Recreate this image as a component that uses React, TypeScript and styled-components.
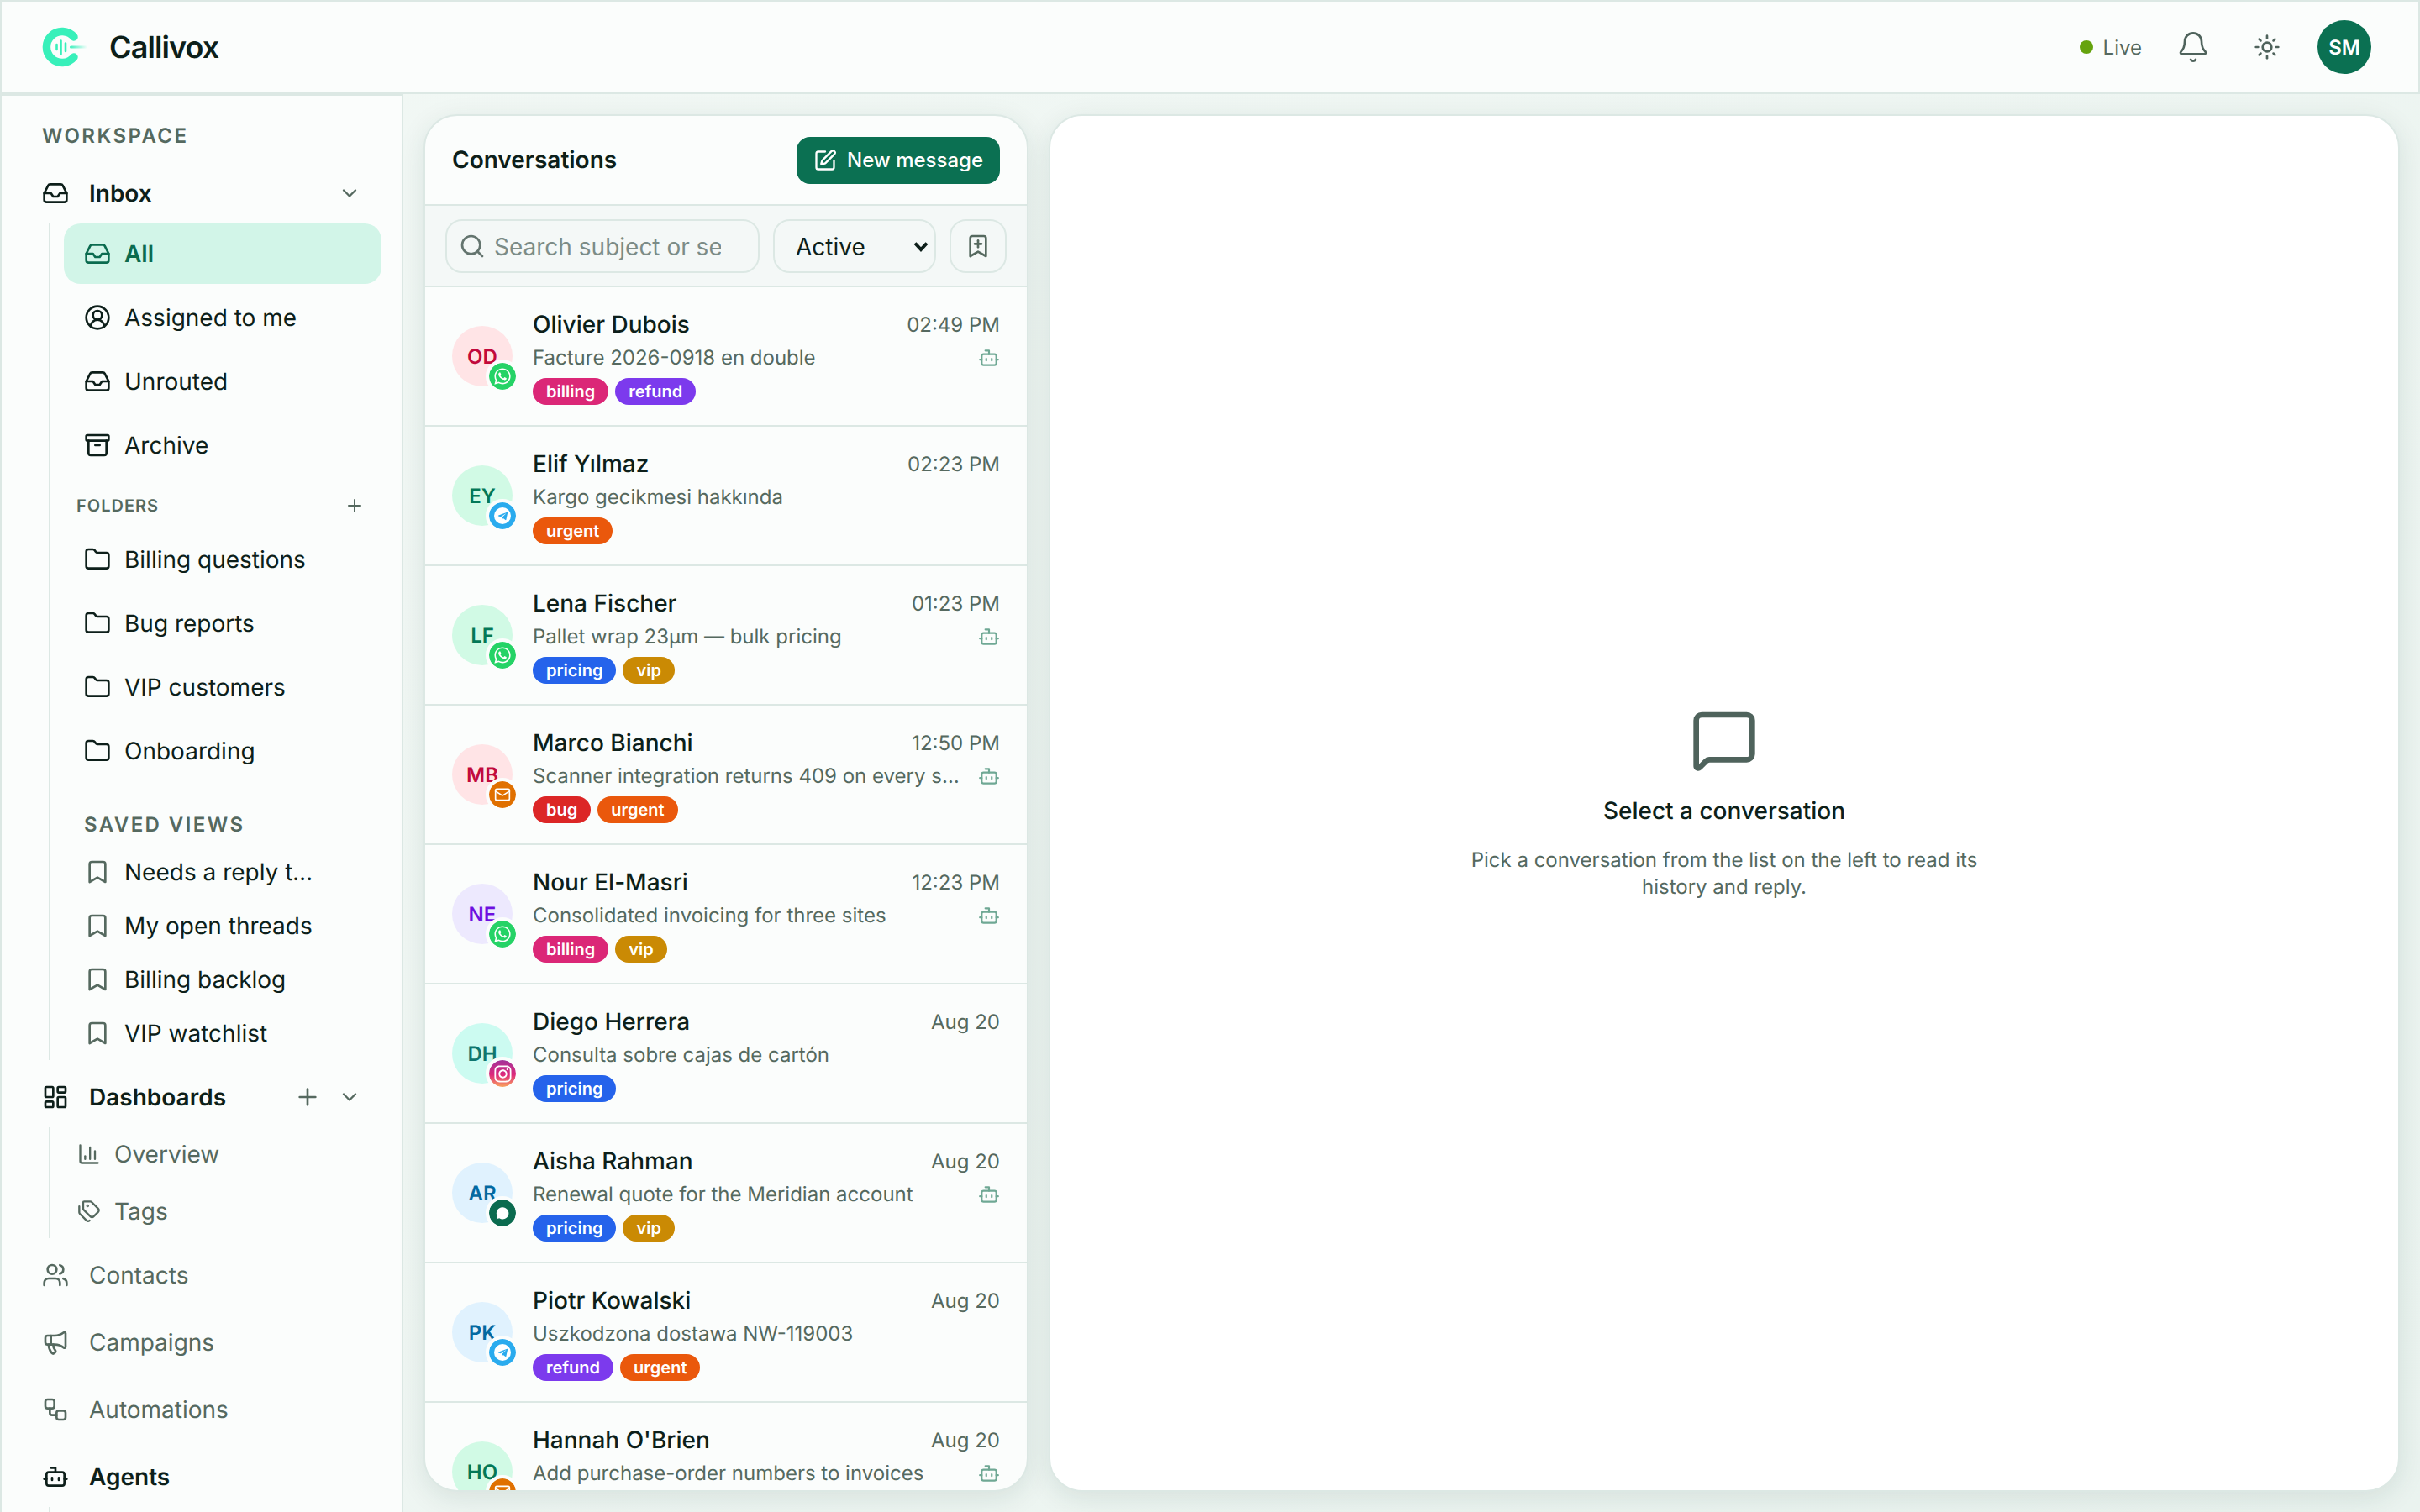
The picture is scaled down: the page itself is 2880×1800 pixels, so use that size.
import React from 'react';
import styled, { createGlobalStyle } from 'styled-components';
import {
  Inbox, CircleUserRound, Archive, Folder, Bookmark, BookmarkPlus, ChevronDown, Plus, LayoutDashboard,
  ChartColumn, Tags, Users, Megaphone, Workflow, Bot, Bell, Sun, Search, SquarePen, MessageSquare, Mail,
} from 'lucide-react';
import { FaWhatsapp, FaTelegramPlane, FaInstagram } from 'react-icons/fa';

const GlobalStyle = createGlobalStyle`
  * { box-sizing: border-box; }
  html, body { margin: 0; padding: 0; height: 100%; }
  body {
    font-family: Inter, "Noto Sans", sans-serif;
    background: #eef5f2;
    color: #0d1f1a;
    overflow: hidden;
    text-rendering: geometricPrecision;
    -webkit-font-smoothing: antialiased;
  }
  #root { height: 100%; }
`;

const Shell = styled.div`
  width: 2880px;
  height: 1800px;
  display: flex;
  flex-direction: column;
  background: linear-gradient(135deg, #f2f8f5, #eaf3ef);
`;

const TopBar = styled.header`
  height: 112px;
  flex: none;
  display: flex;
  align-items: center;
  padding: 0 56px 0 48px;
  background: #fbfdfc;
  border: 2px solid #dce8e4;
`;

const Brand = styled.div`
  display: flex;
  align-items: center;
  gap: 24px;
  font-size: 36px;
  font-weight: 600;
  letter-spacing: -0.9px;
`;

const TopActions = styled.div`
  margin-left: auto;
  display: flex;
  align-items: center;
`;

const Live = styled.div`
  display: flex;
  align-items: center;
  gap: 12px;
  font-size: 24px;
  color: #55695f;
  margin-right: 41px;
`;

const Dot = styled.span`
  width: 16px;
  height: 16px;
  border-radius: 50%;
  background: #65a30d;
`;

const TopIcon = styled.span<{ $gap?: number }>`
  display: flex;
  margin-left: ${(p) => p.$gap ?? 0}px;
  color: #4f635c;
`;

const UserAvatar = styled.div`
  width: 64px;
  height: 64px;
  border-radius: 50%;
  background: #0b7052;
  color: #fff;
  font-size: 24px;
  font-weight: 600;
  display: flex;
  align-items: center;
  justify-content: center;
  margin-left: 44px;
`;

const Body = styled.div`
  flex: 1;
  min-height: 0;
  display: flex;
`;

const Sidebar = styled.nav`
  width: 480px;
  flex: none;
  background: #fbfdfc;
  border: 2px solid #dce8e4;
  border-bottom: none;
  padding: 29px 24px 0 48px;
  overflow: hidden;
  display: flex;
  flex-direction: column;
`;

const SectionLabel = styled.div<{ $indent?: number; $top?: number; $bottom?: number }>`
  font-size: 24px;
  line-height: 38px;
  font-weight: 600;
  letter-spacing: 2.4px;
  color: #55695f;
  padding-left: ${(p) => p.$indent ?? 0}px;
  margin-top: ${(p) => p.$top ?? 0}px;
  margin-bottom: ${(p) => p.$bottom ?? 0}px;
`;

const TopRow = styled.div<{ $strong?: boolean }>`
  height: 72px;
  margin-top: 8px;
  flex: none;
  display: flex;
  align-items: center;
  gap: 24px;
  padding-right: 24px;
  font-size: 28px;
  font-weight: ${(p) => (p.$strong ? 600 : 400)};
  color: ${(p) => (p.$strong ? '#0d1f1a' : '#55695f')};
  svg { flex: none; }
`;

const RowEnd = styled.div`
  margin-left: auto;
  display: flex;
  align-items: center;
  gap: 20px;
  color: #55695f;
`;

const Rail = styled.div<{ $fill?: boolean }>`
  margin-left: 8px;
  border-left: 2px solid #dce8e4;
  flex: ${(p) => (p.$fill ? 1 : 'none')};
`;

const SubList = styled.div`
  display: flex;
  flex-direction: column;
  gap: 4px;
  padding-left: 16px;
`;

const SubItem = styled.div<{ $active?: boolean }>`
  height: 72px;
  display: flex;
  align-items: center;
  gap: 16px;
  padding-left: 24px;
  border-radius: 20px;
  font-size: 28px;
  font-weight: ${(p) => (p.$active ? 600 : 400)};
  color: ${(p) => (p.$active ? '#0b6b4f' : '#0d1f1a')};
  background: ${(p) => (p.$active ? '#d2f5e8' : 'transparent')};
  svg { flex: none; }
`;

const FolderHead = styled.div`
  height: 56px;
  margin-top: 8px;
  display: flex;
  align-items: center;
  justify-content: space-between;
  padding: 0 20px 0 31px;
  font-size: 20px;
  font-weight: 600;
  letter-spacing: 1px;
  color: #55695f;
`;

const SavedItem = styled.div`
  height: 64px;
  display: flex;
  align-items: center;
  gap: 16px;
  padding-left: 40px;
  font-size: 28px;
  svg { flex: none; color: #55695f; }
`;

const SavedText = styled.span`
  width: 230px;
  white-space: nowrap;
  overflow: hidden;
  text-overflow: ellipsis;
`;

const DashList = styled.div`
  display: flex;
  flex-direction: column;
  gap: 4px;
`;

const DashItem = styled.div`
  height: 64px;
  display: flex;
  align-items: center;
  gap: 16px;
  padding-left: 32px;
  font-size: 28px;
  color: #55695f;
  svg { flex: none; }
`;

const Main = styled.main`
  flex: 1;
  min-width: 0;
  display: flex;
  gap: 24px;
  padding: 24px;
`;

const Panel = styled.section`
  background: #fbfdfc;
  border: 2px solid #dce8e4;
  border-radius: 40px;
  box-shadow: 0 8px 32px rgba(15, 60, 45, 0.1);
  overflow: hidden;
  display: flex;
  flex-direction: column;
`;

const ListPanel = styled(Panel)`
  width: 720px;
  flex: none;
`;

const DetailPanel = styled(Panel)`
  flex: 1;
  min-width: 0;
  align-items: center;
  justify-content: center;
  background: #fff;
`;

const PanelHead = styled.div`
  height: 107px;
  flex: none;
  display: flex;
  align-items: center;
  justify-content: space-between;
  padding: 0 32px;
  border-bottom: 2px solid #dce8e4;
`;

const PanelTitle = styled.h2`
  margin: 0 0 2px;
  font-size: 28px;
  font-weight: 600;
`;

const NewButton = styled.button`
  height: 56px;
  width: 242px;
  display: flex;
  align-items: center;
  justify-content: center;
  gap: 12px;
  border: none;
  border-radius: 16px;
  background: #0b7052;
  color: #fff;
  font-family: inherit;
  font-size: 24px;
  font-weight: 500;
`;

const Toolbar = styled.div`
  flex: none;
  height: 97px;
  display: flex;
  align-items: center;
  gap: 16px;
  padding: 0 24px;
  background: #f4f8f7;
  border-bottom: 2px solid #dce8e4;
`;

const SearchBox = styled.label`
  width: 374px;
  height: 64px;
  flex: none;
  display: flex;
  align-items: center;
  gap: 10px;
  padding-left: 14px;
  border: 2px solid #dce8e4;
  border-radius: 20px;
  color: #64756f;
  svg { flex: none; }
`;

const SearchInput = styled.input`
  flex: 1;
  min-width: 0;
  margin-right: 44px;
  border: none;
  outline: none;
  padding: 2px 0 0;
  background: transparent;
  font-family: inherit;
  font-size: 28px;
  &::placeholder { color: #7c8c87; opacity: 1; }
`;

const SelectWrap = styled.div`
  position: relative;
  width: 194px;
  height: 64px;
  flex: none;
`;

const StatusSelect = styled.select`
  width: 100%;
  height: 100%;
  appearance: none;
  padding: 2px 0 0 25px;
  border: 2px solid #dce8e4;
  border-radius: 20px;
  background: transparent;
  color: #0d1f1a;
  font-family: inherit;
  font-size: 28px;
`;

const SelectArrow = styled.svg`
  position: absolute;
  top: 26px;
  right: 8px;
  pointer-events: none;
`;

const SaveButton = styled.button`
  width: 68px;
  height: 64px;
  flex: none;
  display: flex;
  align-items: center;
  justify-content: center;
  padding: 0;
  border: 2px solid #dce8e4;
  border-radius: 20px;
  background: transparent;
  color: #55695f;
`;

const List = styled.div`
  flex: 1;
  min-height: 0;
  overflow: hidden;
`;

const Row = styled.article`
  height: 166px;
  display: flex;
  align-items: center;
  gap: 24px;
  padding: 0 32px;
  border-bottom: 2px solid #dce8e4;
`;

const Avatar = styled.div<{ $bg: string; $fg: string }>`
  position: relative;
  width: 72px;
  height: 72px;
  flex: none;
  border-radius: 50%;
  background: ${(p) => p.$bg};
  color: ${(p) => p.$fg};
  font-size: 24px;
  font-weight: 600;
  display: flex;
  align-items: center;
  justify-content: center;
`;

const Badge = styled.span<{ $bg: string }>`
  position: absolute;
  right: -8px;
  bottom: -8px;
  width: 40px;
  height: 40px;
  border: 4px solid #fbfdfc;
  border-radius: 50%;
  background: ${(p) => p.$bg};
  background-clip: padding-box;
  color: #fff;
  display: flex;
  align-items: center;
  justify-content: center;
`;

const TelegramDisc = styled.span`
  width: 20px;
  height: 20px;
  border-radius: 50%;
  background: #fff;
  color: #2aabee;
  display: flex;
  align-items: center;
  justify-content: center;
`;

const RowBody = styled.div`
  flex: 1;
  min-width: 0;
`;

const RowLine = styled.div`
  display: flex;
  align-items: center;
  justify-content: space-between;
  gap: 16px;
`;

const Name = styled.span`
  font-size: 28px;
  line-height: 40px;
  font-weight: 500;
`;

const Time = styled.span`
  font-size: 24px;
  color: #55695f;
`;

const Preview = styled.span`
  flex: 1;
  min-width: 0;
  font-size: 24px;
  line-height: 40px;
  color: #55695f;
  white-space: nowrap;
  overflow: hidden;
  text-overflow: ellipsis;
`;

const BotMark = styled(Bot)`
  flex: none;
  color: #6fa894;
`;

const TagRow = styled.div`
  display: flex;
  gap: 8px;
  margin-top: 4px;
`;

const Tag = styled.span<{ $bg: string }>`
  height: 32px;
  padding: 0 16px;
  border-radius: 16px;
  background: ${(p) => p.$bg};
  color: #fff;
  font-size: 20px;
  line-height: 32px;
  font-weight: 600;
`;

const EmptyTitle = styled.h3`
  margin: 24px 0 0;
  font-size: 28px;
  line-height: 40px;
  font-weight: 500;
`;

const EmptyText = styled.p`
  margin: 23px 0 0;
  width: 640px;
  text-align: center;
  font-size: 24px;
  line-height: 32px;
  color: #55695f;
`;

const LogoMark = () => (
  <svg width="56" height="48" viewBox="0 0 56 48" fill="none" aria-hidden="true">
    <defs>
      <linearGradient id="logoFade" x1="0" x2="1" y1="0" y2="0">
        <stop offset="0" stopColor="#3cf0bd" />
        <stop offset="1" stopColor="#3cf0bd" stopOpacity="0" />
      </linearGradient>
    </defs>
    <path d="M38 12A18.5 18.5 0 1 0 38 36" stroke="#38f0ba" strokeWidth="9.5" strokeLinecap="round" />
    <path d="M17.5 21v6M22.5 16.5v16M28 19.5v9.5" stroke="#38f0ba" strokeWidth="2.6" strokeLinecap="round" />
    <rect x="33" y="22.6" width="21" height="3" rx="1.5" fill="url(#logoFade)" />
  </svg>
);

const ChatGlyph = () => (
  <svg width="18" height="18" viewBox="0 0 24 24" fill="#fff" aria-hidden="true">
    <path d="M12 3a9.5 9.5 0 0 0-8.2 14.3L2.5 21.5l4.4-1.2A9.5 9.5 0 1 0 12 3z" />
  </svg>
);

type Channel = 'wa' | 'tg' | 'mail' | 'ig' | 'chat';

const channelBg: Record<Channel, string> = {
  wa: '#25d366',
  tg: '#2aabee',
  mail: '#e07000',
  ig: 'linear-gradient(180deg, #a3339a 0%, #dd2a7b 55%, #f9a35d 100%)',
  chat: '#0b6b4f',
};

const ChannelBadge = ({ type }: { type: Channel }) => (
  <Badge $bg={channelBg[type]}>
    {type === 'wa' && <FaWhatsapp size={22} />}
    {type === 'tg' && (
      <TelegramDisc>
        <FaTelegramPlane size={13} />
      </TelegramDisc>
    )}
    {type === 'mail' && <Mail size={20} strokeWidth={2} />}
    {type === 'ig' && <FaInstagram size={23} />}
    {type === 'chat' && <ChatGlyph />}
  </Badge>
);

const tagColors: Record<string, string> = {
  billing: '#db2777',
  refund: '#7c3aed',
  urgent: '#ea580c',
  pricing: '#2563eb',
  vip: '#ca8a04',
  bug: '#dc2626',
};

const rose = ['#ffe4e6', '#c20a3c'];
const green = ['#d1fae5', '#047857'];
const violet = ['#ede9fe', '#6d10e0'];
const teal = ['#ccfbf1', '#0f766e'];
const sky = ['#e0f2fe', '#0369a1'];

const rows = [
  { i: 'OD', c: rose, ch: 'wa', n: 'Olivier Dubois', t: '02:49 PM', p: 'Facture 2026-0918 en double', b: true, g: ['billing', 'refund'] },
  { i: 'EY', c: green, ch: 'tg', n: 'Elif Yılmaz', t: '02:23 PM', p: 'Kargo gecikmesi hakkında', b: false, g: ['urgent'] },
  { i: 'LF', c: green, ch: 'wa', n: 'Lena Fischer', t: '01:23 PM', p: 'Pallet wrap 23µm — bulk pricing', b: true, g: ['pricing', 'vip'] },
  { i: 'MB', c: rose, ch: 'mail', n: 'Marco Bianchi', t: '12:50 PM', p: 'Scanner integration returns 409 on every scan attempt', b: true, g: ['bug', 'urgent'] },
  { i: 'NE', c: violet, ch: 'wa', n: 'Nour El-Masri', t: '12:23 PM', p: 'Consolidated invoicing for three sites', b: true, g: ['billing', 'vip'] },
  { i: 'DH', c: teal, ch: 'ig', n: 'Diego Herrera', t: 'Aug 20', p: 'Consulta sobre cajas de cartón', b: false, g: ['pricing'] },
  { i: 'AR', c: sky, ch: 'chat', n: 'Aisha Rahman', t: 'Aug 20', p: 'Renewal quote for the Meridian account', b: true, g: ['pricing', 'vip'] },
  { i: 'PK', c: sky, ch: 'tg', n: 'Piotr Kowalski', t: 'Aug 20', p: 'Uszkodzona dostawa NW-119003', b: false, g: ['refund', 'urgent'] },
  { i: 'HO', c: green, ch: 'mail', n: "Hannah O'Brien", t: 'Aug 20', p: 'Add purchase-order numbers to invoices', b: true, g: ['billing'] },
] as const;

export default function App() {
  return (
    <Shell>
      <GlobalStyle />
      <TopBar>
        <Brand>
          <LogoMark />
          Callivox
        </Brand>
        <TopActions>
          <Live>
            <Dot />
            Live
          </Live>
          <TopIcon>
            <Bell size={40} strokeWidth={1.6} />
          </TopIcon>
          <TopIcon $gap={52}>
            <Sun size={32} />
          </TopIcon>
          <UserAvatar>SM</UserAvatar>
        </TopActions>
      </TopBar>
      <Body>
        <Sidebar>
          <SectionLabel $bottom={5}>WORKSPACE</SectionLabel>
          <TopRow $strong>
            <Inbox size={32} />
            Inbox
            <RowEnd>
              <ChevronDown size={28} />
            </RowEnd>
          </TopRow>
          <Rail>
            <SubList>
              <SubItem $active><Inbox size={32} />All</SubItem>
              <SubItem><CircleUserRound size={32} />Assigned to me</SubItem>
              <SubItem><Inbox size={32} />Unrouted</SubItem>
              <SubItem><Archive size={32} />Archive</SubItem>
            </SubList>
            <FolderHead>
              FOLDERS
              <Plus size={24} color="#55695f" />
            </FolderHead>
            <SubList>
              <SubItem><Folder size={32} />Billing questions</SubItem>
              <SubItem><Folder size={32} />Bug reports</SubItem>
              <SubItem><Folder size={32} />VIP customers</SubItem>
              <SubItem><Folder size={32} />Onboarding</SubItem>
            </SubList>
            <SectionLabel $indent={40} $top={33} $bottom={5}>SAVED VIEWS</SectionLabel>
            <SavedItem><Bookmark size={32} /><SavedText>Needs a reply today</SavedText></SavedItem>
            <SavedItem><Bookmark size={32} /><SavedText>My open threads</SavedText></SavedItem>
            <SavedItem><Bookmark size={32} /><SavedText>Billing backlog</SavedText></SavedItem>
            <SavedItem><Bookmark size={32} /><SavedText>VIP watchlist</SavedText></SavedItem>
          </Rail>
          <TopRow $strong>
            <LayoutDashboard size={32} />
            Dashboards
            <RowEnd>
              <Plus size={32} />
              <ChevronDown size={28} />
            </RowEnd>
          </TopRow>
          <Rail>
            <DashList>
              <DashItem><ChartColumn size={28} />Overview</DashItem>
              <DashItem><Tags size={28} />Tags</DashItem>
            </DashList>
          </Rail>
          <TopRow><Users size={32} />Contacts</TopRow>
          <TopRow><Megaphone size={32} />Campaigns</TopRow>
          <TopRow><Workflow size={32} />Automations</TopRow>
          <TopRow $strong><Bot size={32} />Agents</TopRow>
          <Rail $fill />
        </Sidebar>
        <Main>
          <ListPanel>
            <PanelHead>
              <PanelTitle>Conversations</PanelTitle>
              <NewButton><SquarePen size={28} />New message</NewButton>
            </PanelHead>
            <Toolbar>
              <SearchBox>
                <Search size={32} />
                <SearchInput placeholder="Search subject or sender" />
              </SearchBox>
              <SelectWrap>
                <StatusSelect defaultValue="Active">
                  <option>Active</option>
                  <option>Closed</option>
                </StatusSelect>
                <SelectArrow width="20" height="14" viewBox="0 0 20 14" fill="none" aria-hidden="true">
                  <path d="M3 2.5l7 7.5 7-7.5" stroke="#0d1f1a" strokeWidth="4" />
                </SelectArrow>
              </SelectWrap>
              <SaveButton><BookmarkPlus size={32} /></SaveButton>
            </Toolbar>
            <List>
              {rows.map((r) => (
                <Row key={r.i}>
                  <Avatar $bg={r.c[0]} $fg={r.c[1]}>
                    {r.i}
                    <ChannelBadge type={r.ch} />
                  </Avatar>
                  <RowBody>
                    <RowLine>
                      <Name>{r.n}</Name>
                      <Time>{r.t}</Time>
                    </RowLine>
                    <RowLine>
                      <Preview>{r.p}</Preview>
                      {r.b && <BotMark size={26} />}
                    </RowLine>
                    <TagRow>
                      {r.g.map((g) => (
                        <Tag key={g} $bg={tagColors[g]}>{g}</Tag>
                      ))}
                    </TagRow>
                  </RowBody>
                </Row>
              ))}
            </List>
          </ListPanel>
          <DetailPanel>
            <MessageSquare size={80} color="#4f635c" />
            <EmptyTitle>Select a conversation</EmptyTitle>
            <EmptyText>Pick a conversation from the list on the left to read its history and reply.</EmptyText>
          </DetailPanel>
        </Main>
      </Body>
    </Shell>
  );
}
